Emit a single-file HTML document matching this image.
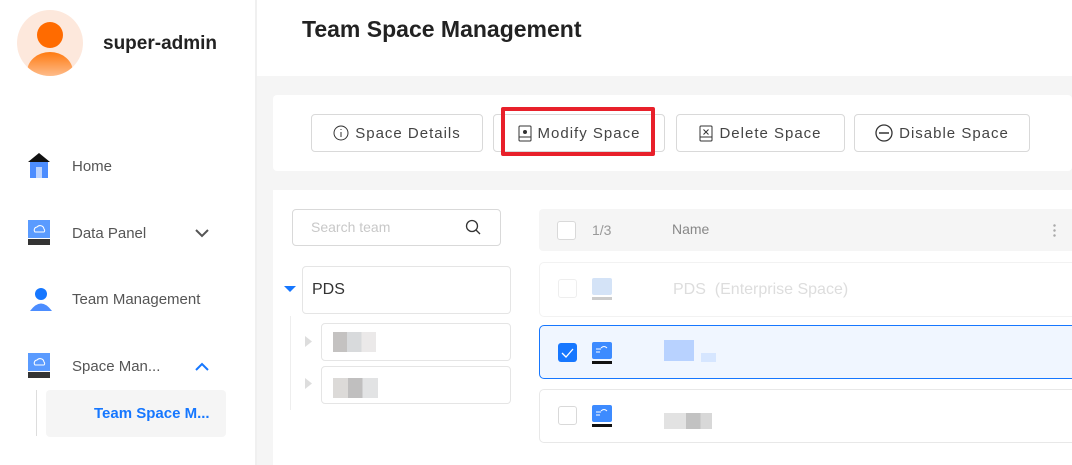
<!DOCTYPE html>
<html><head><meta charset="utf-8"><style>
*{box-sizing:border-box;margin:0;padding:0}
body{width:1072px;height:465px;overflow:hidden;background:#f5f5f5;font-family:"Liberation Sans","Noto Sans CJK SC",sans-serif;position:relative}
.a{position:absolute}
.side{left:0;top:0;width:255px;height:465px;background:#fff}
.nav{font-size:15px;color:#555}
.btn{position:absolute;top:114px;height:38px;border:1px solid #d9d9d9;border-radius:4px;background:#fff;font-size:15px;color:#444;letter-spacing:1px;display:flex;align-items:center;justify-content:center;gap:6px}
.cb{position:absolute;width:19px;height:19px;border:1px solid #d9d9d9;border-radius:3px;background:#fff}
.row{position:absolute;left:539px;width:540px;border:1px solid #e8e8e8;border-radius:5px;background:#fff}
</style></head><body>
<div class="a side"></div>
<div class="a" style="left:255px;top:0;width:817px;height:76px;background:#fff"></div>
<div class="a" style="left:255px;top:0;width:2px;height:465px;background:#f0f0f0"></div>
<!-- avatar -->
<div class="a" style="left:17px;top:10px;width:66px;height:66px;border-radius:50%;background:#fde8dc;overflow:hidden">
<div class="a" style="left:20px;top:12px;width:26px;height:26px;border-radius:50%;background:#ff6b00"></div>
<div class="a" style="left:10px;top:42px;width:46px;height:40px;border-radius:50%;background:linear-gradient(#ff7a10,#fde8dc)"></div>
</div>
<div class="a" style="left:103px;top:33px;font-size:19px;font-weight:bold;color:#222">super-admin</div>
<!-- nav -->
<svg class="a" style="left:27px;top:152px" width="24" height="26"><path d="M1 10 L12 1 L23 10Z" fill="#111"/><rect x="3" y="10" width="18" height="16" fill="#4c8dff"/><rect x="9" y="15" width="6" height="11" fill="#bcd4ff"/></svg>
<div class="a nav" style="left:72px;top:158px">Home</div>
<svg class="a" style="left:27px;top:219px" width="24" height="27"><rect x="1" y="1" width="22" height="18" fill="#5a9bff"/><path d="M8 13 a3 3 0 0 1 2-5 a4 4 0 0 1 7 2 a2 2 0 0 1 0 3z" fill="none" stroke="#fff"/><rect x="1" y="20" width="22" height="6" fill="#333"/></svg>
<div class="a nav" style="left:72px;top:225px">Data Panel</div>
<svg class="a" style="left:194px;top:228px" width="16" height="10"><path d="M2 2 L8 8 L14 2" fill="none" stroke="#555" stroke-width="2"/></svg>
<svg class="a" style="left:27px;top:286px" width="26" height="26"><circle cx="14" cy="8" r="6" fill="#1677ff"/><path d="M3 25 Q14 10 25 25Z" fill="#4c8dff"/></svg>
<div class="a nav" style="left:72px;top:291px">Team Management</div>
<svg class="a" style="left:27px;top:352px" width="24" height="27"><rect x="1" y="1" width="22" height="18" fill="#5a9bff"/><path d="M8 13 a3 3 0 0 1 2-5 a4 4 0 0 1 7 2 a2 2 0 0 1 0 3z" fill="none" stroke="#fff"/><rect x="1" y="20" width="22" height="6" fill="#333"/></svg>
<div class="a nav" style="left:72px;top:358px">Space Man...</div>
<svg class="a" style="left:194px;top:362px" width="16" height="10"><path d="M2 8 L8 2 L14 8" fill="none" stroke="#1677ff" stroke-width="2"/></svg>
<div class="a" style="left:36px;top:390px;width:1px;height:46px;background:#ddd"></div>
<div class="a" style="left:46px;top:390px;width:180px;height:47px;background:#f5f5f5;border-radius:4px"></div>
<div class="a" style="left:94px;top:405px;font-size:15px;font-weight:bold;color:#1677ff">Team Space M...</div>
<!-- title -->
<div class="a" style="left:302px;top:16px;font-size:23px;font-weight:bold;color:#222">Team Space Management</div>
<!-- toolbar -->
<div class="a" style="left:273px;top:95px;width:799px;height:76px;background:#fff;border-radius:4px"></div>
<div class="btn" style="left:311px;width:172px"><svg width="16" height="16"><circle cx="8" cy="8" r="7" fill="none" stroke="#333"/><path d="M8 7v5M8 4v1" stroke="#333"/></svg>Space Details</div>
<div class="btn" style="left:493px;width:172px"><svg width="14" height="17"><rect x="1" y="1" width="12" height="15" rx="1" fill="none" stroke="#333"/><circle cx="7" cy="7" r="2" fill="#333"/><path d="M1 12h12" stroke="#333"/></svg>Modify Space</div>
<div class="btn" style="left:676px;width:169px"><svg width="14" height="17"><rect x="1" y="1" width="12" height="15" rx="1" fill="none" stroke="#333"/><path d="M4.5 4.5l5 5M9.5 4.5l-5 5M1 12h12" stroke="#333"/></svg>Delete Space</div>
<div class="btn" style="left:854px;width:176px"><svg width="18" height="18"><circle cx="9" cy="9" r="8" fill="none" stroke="#333" stroke-width="1.3"/><path d="M4 9h10" stroke="#333" stroke-width="1.5"/></svg>Disable Space</div>
<div class="a" style="left:501px;top:107px;width:154px;height:49px;border:4px solid #e8202a;border-radius:2px"></div>
<!-- left panel -->
<div class="a" style="left:273px;top:190px;width:248px;height:275px;background:#fff"></div>
<div class="a" style="left:292px;top:209px;width:209px;height:37px;border:1px solid #d9d9d9;border-radius:4px"></div>
<div class="a" style="left:311px;top:219px;font-size:14px;color:#c8c8c8">Search team</div>
<svg class="a" style="left:465px;top:219px" width="17" height="17"><circle cx="7" cy="7" r="5.5" fill="none" stroke="#333" stroke-width="1.3"/><path d="M11 11l4 4" stroke="#333" stroke-width="1.3"/></svg>
<svg class="a" style="left:284px;top:286px" width="12" height="8"><path d="M0 0h12L6 6z" fill="#1677ff"/></svg>
<div class="a" style="left:302px;top:266px;width:209px;height:48px;border:1px solid #e5e5e5;border-radius:4px"></div>
<div class="a" style="left:312px;top:281px;font-size:16px;color:#333">PDS</div>
<div class="a" style="left:290px;top:316px;width:1px;height:94px;background:#eee"></div>
<div class="a" style="left:321px;top:323px;width:190px;height:38px;border:1px solid #e5e5e5;border-radius:4px"></div>
<div class="a" style="left:321px;top:366px;width:190px;height:38px;border:1px solid #e5e5e5;border-radius:4px"></div>
<svg class="a" style="left:305px;top:336px" width="7" height="11"><path d="M0 0l7 5.5L0 11z" fill="#ddd"/></svg>
<svg class="a" style="left:305px;top:378px" width="7" height="11"><path d="M0 0l7 5.5L0 11z" fill="#ddd"/></svg>
<div class="a" style="left:333px;top:332px;width:43px;height:20px;background:linear-gradient(90deg,#c4c2c1 0,#c4c2c1 33%,#d8dadc 33%,#d8dadc 66%,#ebe9e9 66%)"></div>
<div class="a" style="left:333px;top:378px;width:45px;height:20px;background:linear-gradient(90deg,#dcdad8 0,#dcdad8 33%,#c0bfbf 33%,#c0bfbf 66%,#e2e3e4 66%)"></div>
<!-- table -->
<div class="a" style="left:521px;top:190px;width:551px;height:275px;background:#fff"></div>
<div class="a" style="left:539px;top:209px;width:540px;height:42px;background:#f5f5f5;border-radius:4px"></div>
<div class="cb" style="left:557px;top:221px"></div>
<div class="a" style="left:592px;top:222px;font-size:14px;color:#999">1/3</div>
<div class="a" style="left:672px;top:221px;font-size:14px;color:#888">Name</div>
<div class="a" style="left:1053px;top:223px;width:3px;height:14px;background:radial-gradient(circle,#aaa 1px,transparent 1.5px) 0 0/3px 5px"></div>
<div class="row" style="top:262px;height:55px;border-color:#f2f2f2"></div>
<div class="cb" style="left:558px;top:279px;border-color:#eee"></div>
<svg class="a" style="left:590px;top:277px" width="24" height="25"><rect x="2" y="1" width="20" height="17" rx="2" fill="#d4e3f7"/><rect x="2" y="20" width="20" height="3" fill="#ccc"/></svg>
<div class="a" style="left:673px;top:281px;font-size:16px;color:#ddd">PDS&nbsp;&nbsp;(Enterprise Space)</div>
<div class="row" style="top:325px;height:54px;border-color:#1677ff;background:#f0f6ff"></div>
<div class="a" style="left:558px;top:343px;width:19px;height:19px;background:#1677ff;border-radius:3px"></div>
<svg class="a" style="left:558px;top:343px" width="19" height="19"><path d="M4 10l4 4 7-8" fill="none" stroke="#fff" stroke-width="1.3"/></svg>
<svg class="a" style="left:590px;top:341px" width="24" height="25"><rect x="2" y="1" width="20" height="17" rx="2" fill="#3d8bff"/><path d="M6 8h5M6 11h4M11 7q3-3 6 0" stroke="#fff" fill="none"/><rect x="2" y="20" width="20" height="3" fill="#111"/></svg>
<div class="a" style="left:664px;top:340px;width:30px;height:21px;background:#b8d2ff"></div>
<div class="a" style="left:701px;top:353px;width:15px;height:9px;background:#d6e6ff"></div>
<div class="row" style="top:389px;height:54px"></div>
<div class="cb" style="left:558px;top:406px"></div>
<svg class="a" style="left:590px;top:404px" width="24" height="25"><rect x="2" y="1" width="20" height="17" rx="2" fill="#3d8bff"/><path d="M6 8h5M6 11h4M11 7q3-3 6 0" stroke="#fff" fill="none"/><rect x="2" y="20" width="20" height="3" fill="#111"/></svg>
<div class="a" style="left:664px;top:413px;width:48px;height:16px;background:linear-gradient(90deg,#e2e2e2 0,#e2e2e2 46%,#c2c2c2 46%,#c2c2c2 76%,#d8d8d8 76%)"></div>
</body></html>
